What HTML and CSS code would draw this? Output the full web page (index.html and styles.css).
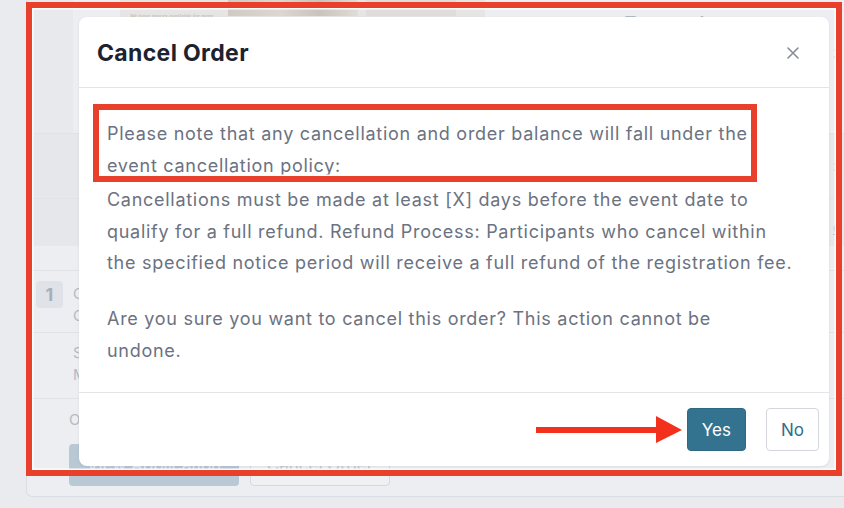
FILE: index.html
```html
<!DOCTYPE html>
<html lang="en">
<head>
<meta charset="utf-8">
<title>Cancel Order</title>
<link rel="stylesheet" href="styles.css">
</head>
<body>
<div class="page">
  <div class="card">
    <div class="card-top">
      <div class="banner">
        <div class="banner-copy">
          <div class="banner-title">Lakeside</div>
          <div class="banner-sub">We have spaces available for more</div>
        </div>
        <div class="banner-photo"></div>
        <div class="banner-photo light"></div>
      </div>
      <div class="rental-title">Rental</div>
      <div class="edge-text top-edge">3</div>
    </div>
    <div class="row row-a"><span class="edge-text">:</span></div>
    <div class="row row-b"><span class="edge-text link">o</span></div>
    <div class="row row-c">
      <div class="badge">1</div>
      <div class="row-lines">
        <span>O</span>
        <span>C</span>
      </div>
    </div>
    <div class="row row-d">
      <div class="row-lines indent">
        <span>S</span>
        <span>M</span>
      </div>
    </div>
    <div class="row row-e">
      <div class="row-label">O</div>
      <div class="row-buttons">
        <span class="bg-btn solid">View Application</span>
        <span class="bg-btn outline">Cancel Order</span>
      </div>
    </div>
  </div>
</div>

<div class="modal" role="dialog" aria-labelledby="modal-title">
  <div class="modal-header">
    <h2 id="modal-title" class="modal-title">Cancel Order</h2>
    <button class="close-btn" aria-label="Close">
      <svg width="12" height="12" viewBox="0 0 12 12"><path d="M1 1 L11 11 M11 1 L1 11" stroke="#868c99" stroke-width="1.6" stroke-linecap="round" fill="none"/></svg>
    </button>
  </div>
  <div class="modal-body">
    <p class="policy">Please note that any cancellation and order balance will fall under the<br>event cancellation policy:</p>
    <p class="terms">Cancellations must be made at least [X] days before the event date to<br>qualify for a full refund. Refund Process: Participants who cancel within<br>the specified notice period will receive a full refund of the registration fee.</p>
    <p class="confirm">Are you sure you want to cancel this order? This action cannot be<br>undone.</p>
  </div>
  <div class="modal-footer">
    <button class="btn btn-yes">Yes</button>
    <button class="btn btn-no">No</button>
  </div>
</div>

<div class="mark mark-outer"></div>
<div class="mark mark-inner"></div>
<svg class="arrow" width="150" height="30" viewBox="0 0 150 30">
  <rect x="0" y="11" width="122" height="6" fill="#f2301b"/>
  <polygon points="120,0 146,14 120,27" fill="#f2301b"/>
</svg>
</body>
</html>
```

FILE: styles.css
```css
* { box-sizing: border-box; }

html, body {
  margin: 0;
  padding: 0;
}

body {
  width: 844px;
  height: 508px;
  overflow: hidden;
  background: #e9ebef;
  font-family: Inter, "Liberation Sans", Arial, sans-serif;
  position: relative;
}

/* ---------- dimmed background page ---------- */
.page {
  padding-left: 26px;
}

.card {
  width: 831px;
  height: 497px;
  background: #eceef1;
  border-left: 1px solid #dadde2;
  border-bottom: 1px solid #dadde2;
  border-bottom-left-radius: 6px;
  display: flex;
  flex-direction: column;
  overflow: hidden;
}

.card-top {
  height: 134px;
  flex: none;
  display: flex;
  align-items: flex-start;
  border-bottom: 1px solid #dfe2e6;
  background: linear-gradient(90deg, #e7e9ed 0 46px, #eceef1 46px);
}

.banner {
  margin-left: 93px;
  width: 365px;
  height: 27px;
  background: #e6e5e3;
  display: flex;
  gap: 8px;
  padding-left: 10px;
  overflow: hidden;
}

.banner-copy {
  width: 90px;
  color: #b9b6b2;
  font-family: "Liberation Serif", serif;
}

.banner-title {
  font-size: 11px;
  line-height: 11px;
}

.banner-sub {
  font-size: 6px;
  line-height: 8px;
  font-style: italic;
  margin-top: 1px;
}

.banner-photo {
  width: 130px;
  height: 16px;
  background: linear-gradient(90deg, #cfcac4, #ddd7cf 40%, #c9c3bc 70%, #e0dcd6);
}

.banner-photo.light {
  width: 90px;
  background: #dfdcd9;
}

.rental-title {
  margin-left: 138px;
  margin-top: 10px;
  font-size: 28px;
  line-height: 34px;
  color: #b3b7be;
}

.edge-text {
  margin-left: auto;
  width: 24px;
  color: #b4b9c0;
  font-size: 15px;
}

.top-edge {
  padding-top: 44px;
}

.row {
  flex: none;
  display: flex;
  border-bottom: 1px solid #dfe2e6;
}

.row-a {
  height: 65px;
  background: #e5e7eb;
  padding-top: 22px;
}

.row-b {
  height: 72px;
  background: linear-gradient(#e5e7eb 0 47px, #eceef1 47px);
  padding-top: 19px;
}

.link {
  color: #9fb8c8;
  text-decoration: underline;
}

.row-c {
  height: 62px;
  padding: 10px 0 0 9px;
  gap: 10px;
}

.badge {
  width: 27px;
  height: 27px;
  border-radius: 4px;
  background: #dfe3e8;
  color: #a7b0ba;
  font-weight: 700;
  font-size: 18px;
  display: flex;
  align-items: center;
  justify-content: center;
}

.row-lines {
  display: flex;
  flex-direction: column;
  color: #b5bbc3;
  font-size: 15px;
  line-height: 22px;
  padding-top: 2px;
}

.row-d {
  height: 66px;
  padding: 7px 0 0 46px;
}

.row-e {
  flex: 1;
  border-bottom: none;
  flex-direction: column;
  padding: 11px 0 0 42px;
}

.row-label {
  color: #b5bbc3;
  font-size: 15px;
  line-height: 20px;
}

.row-buttons {
  display: flex;
  gap: 11px;
  margin-top: 14px;
}

.bg-btn {
  height: 42px;
  border-radius: 4px;
  display: flex;
  align-items: center;
  justify-content: center;
  font-size: 17px;
}

.bg-btn.solid {
  width: 170px;
  background: #b8c9d5;
  color: #e5ebf0;
}

.bg-btn.outline {
  width: 140px;
  background: #eef0f2;
  border: 1px solid #d6d9de;
  color: #c5cad1;
}

/* ---------- modal ---------- */
.modal {
  position: absolute;
  left: 79px;
  top: 17px;
  width: 750px;
  height: 449px;
  background: #ffffff;
  border-radius: 8px;
  box-shadow: 0 1px 3px rgba(0, 0, 0, 0.08);
  display: flex;
  flex-direction: column;
}

.modal-header {
  height: 71px;
  flex: none;
  display: flex;
  align-items: center;
  justify-content: space-between;
  padding: 2px 30px 0 18px;
  border-bottom: 1px solid #e3e5e9;
}

.modal-title {
  margin: 0;
  font-size: 23px;
  font-weight: 700;
  letter-spacing: 0.35px;
  color: #1c2230;
}

.close-btn {
  border: 0;
  background: none;
  padding: 0;
  width: 12px;
  height: 12px;
  display: flex;
}

.modal-body {
  flex: 1;
  padding: 30px 0 0 28px;
}

.modal-body p {
  margin: 0;
  font-size: 18px;
  line-height: 32px;
  letter-spacing: 0.72px;
  color: #6b7281;
  white-space: nowrap;
}

.modal-body p.terms {
  margin-top: 2px;
  line-height: 31.5px;
}

.modal-body p.confirm {
  margin-top: 24px;
}

.modal-footer {
  flex: none;
  border-top: 1px solid #e3e5e9;
  padding: 15px 10px 15px 0;
  display: flex;
  justify-content: flex-end;
  gap: 20px;
}

.btn {
  height: 43px;
  padding: 0 14px;
  border-radius: 4px;
  font-family: Inter, "Liberation Sans", Arial, sans-serif;
  font-size: 17px;
  cursor: pointer;
}

.btn-yes {
  background: #34738f;
  border: 1px solid #2e6882;
  color: #ffffff;
}

.btn-no {
  background: #ffffff;
  border: 1px solid #d3d6db;
  color: #2f6e8b;
}

/* ---------- annotations ---------- */
.mark {
  position: absolute;
  border: 6px solid #e8402a;
  box-shadow: inset 0 0 0 1.5px #ffffff;
  pointer-events: none;
}

.mark-outer {
  left: 26px;
  top: 2px;
  width: 816px;
  height: 474px;
}

.mark-inner {
  left: 93px;
  top: 104px;
  width: 664px;
  height: 78px;
}

.arrow {
  position: absolute;
  left: 536px;
  top: 416px;
}
```
